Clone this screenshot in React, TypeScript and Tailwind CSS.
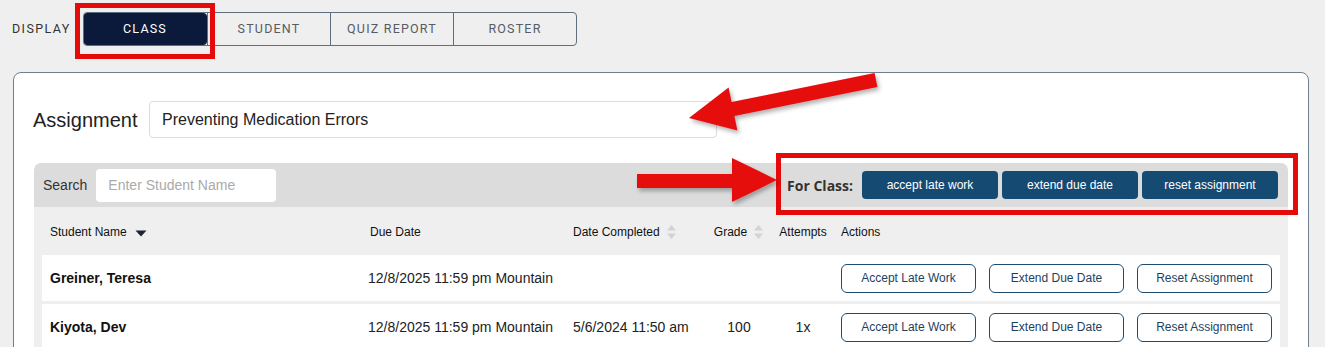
import React from "react";

const TABS = ["CLASS", "STUDENT", "QUIZ REPORT", "ROSTER"];

const STUDENTS = [
    { name: "Greiner, Teresa", due: "12/8/2025 11:59 pm Mountain", completed: "", grade: "", attempts: "" },
    { name: "Kiyota, Dev", due: "12/8/2025 11:59 pm Mountain", completed: "5/6/2024 11:50 am", grade: "100", attempts: "1x" },
];

// both-way sort marker (light gray)
function SortBoth() {
    return (
        <svg width="11" height="16" viewBox="0 0 11 16" className="ml-[6px]">
            <path d="M5.5 1 L10 6.5 H1 Z" fill="#d3d3d3" />
            <path d="M5.5 15 L10 9.5 H1 Z" fill="#d3d3d3" />
        </svg>
    );
}

function SortDown() {
    return (
        <svg width="12" height="7" viewBox="0 0 12 7" className="ml-[8px] mt-[2px]">
            <path d="M0.5 0.5 H11.5 L6 6.5 Z" fill="#1c2337" />
        </svg>
    );
}

function Annotations() {
    return (
        <div className="absolute inset-0 pointer-events-none">
            <div className="absolute left-[75px] top-[3px] w-[140px] h-[56px] border-[5px] border-[#e60b0b]" />
            <div className="absolute left-[776px] top-[153px] w-[522px] h-[62px] border-[5px] border-[#e60b0b]" />
            <svg width="1325" height="347" className="absolute left-0 top-0">
                <defs>
                    <filter id="sh" x="-20%" y="-20%" width="140%" height="140%">
                        <feDropShadow dx="2" dy="3" stdDeviation="2" floodColor="#000" floodOpacity="0.3" />
                    </filter>
                </defs>
                <polygon
                    points="689,118 728.6,87.4 731.6,102.1 874.6,73.1 877.4,86.9 734.4,115.9 737.4,130.6"
                    fill="#e60b0b"
                    filter="url(#sh)"
                />
                <polygon
                    points="777,180 732,158 732,174 637,174 637,188 732,188 732,202"
                    fill="#e60b0b"
                    filter="url(#sh)"
                />
            </svg>
        </div>
    );
}

export default function App() {
    return (
        <div className="relative h-[347px] overflow-hidden bg-[#efefef] font-['Liberation_Sans',Arial,sans-serif]">
            {/* Display tabs */}
            <div className="flex items-center pt-[12px] pl-[12px]">
                <div className="text-[12.5px] tracking-[1.4px] text-[#333] font-['Roboto',sans-serif] w-[71px]">DISPLAY</div>
                <div className="flex h-[34px] border border-[#5f6f7d] rounded-[4px] overflow-hidden">
                    {TABS.map((t, i) => (
                        <div
                            key={t}
                            className={
                                i === 0
                                    ? "w-[124px] -ml-[1px] flex items-center justify-center bg-[#0b1a3b] text-white text-[12.5px] tracking-[1.2px] font-['Roboto',sans-serif] rounded-[4px]"
                                    : "w-[123px] flex items-center justify-center border-l border-[#5f6f7d] text-[#555c63] text-[12.5px] tracking-[1.2px] font-['Roboto',sans-serif]"
                            }
                        >
                            {t}
                        </div>
                    ))}
                </div>
            </div>

            {/* Card */}
            <div className="ml-[13px] mt-[26px] w-[1296px] h-[300px] bg-white border border-[#6e7f8d] rounded-[8px] px-[20px] pt-[28px]">
                <div className="flex items-center">
                    <div className="text-[20px] text-[#222] w-[116px] -ml-[1px]">Assignment</div>
                    <div className="w-[568px] h-[37px] border border-[#dcdcdc] rounded-[4px] flex items-center pl-[12px] text-[16px] text-[#222]">
                        Preventing Medication Errors
                    </div>
                </div>

                {/* Toolbar */}
                <div className="mt-[25px] h-[44px] bg-[#dcdcdc] rounded-t-[7px] flex items-center pl-[9px] pr-[10px]">
                    <div className="text-[14px] text-[#333] mr-[9px]">Search</div>
                    <div className="w-[180px] h-[33px] bg-white rounded-[4px] flex items-center pl-[12px] text-[14px] text-[#aaa]">
                        Enter Student Name
                    </div>
                    <div className="flex-1" />
                    <div className="text-[14px] font-bold text-[#333] font-['Open_Sans',sans-serif] mr-[9px]">For Class:</div>
                    <div className="flex gap-[4px]">
                        {["accept late work", "extend due date", "reset assignment"].map((b) => (
                            <div
                                key={b}
                                className="w-[136px] h-[28px] bg-[#154a72] rounded-[4px] flex items-center justify-center text-white text-[12px]"
                            >
                                {b}
                            </div>
                        ))}
                    </div>
                </div>

                {/* Table */}
                <div className="bg-[#efefef] px-[8px] pb-[4px]">
                    <div className="flex h-[48px] pt-[2px] items-center text-[12px] text-[#111]">
                        <div className="w-[320px] pl-[8px] flex items-center">Student Name<SortDown /></div>
                        <div className="w-[203px] pl-[8px]">Due Date</div>
                        <div className="w-[141px] pl-[8px] flex items-center">Date Completed<SortBoth /></div>
                        <div className="w-[66px] flex items-center justify-center">Grade<SortBoth /></div>
                        <div className="w-[62px] text-center">Attempts</div>
                        <div className="flex-1 pl-[7px]">Actions</div>
                    </div>
                    <div className="flex flex-col gap-[3px]">
                        {STUDENTS.map((s) => (
                            <div key={s.name} className="flex h-[46px] items-center bg-white text-[14px] text-[#222]">
                                <div className="w-[320px] pl-[8px] font-bold text-[#111]">{s.name}</div>
                                <div className="w-[203px] pl-[6px]">{s.due}</div>
                                <div className="w-[141px] pl-[8px]">{s.completed}</div>
                                <div className="w-[66px] text-center">{s.grade}</div>
                                <div className="w-[62px] text-center">{s.attempts}</div>
                                <div className="flex-1 pl-[7px] flex gap-[13px]">
                                    {["Accept Late Work", "Extend Due Date", "Reset Assignment"].map((b) => (
                                        <div
                                            key={b}
                                            className="w-[135px] h-[29px] border border-[#1e4b6e] rounded-[6px] flex items-center justify-center text-[12px] text-[#1f3f5e]"
                                        >
                                            {b}
                                        </div>
                                    ))}
                                </div>
                            </div>
                        ))}
                    </div>
                </div>
            </div>

            <Annotations />
        </div>
    );
}
